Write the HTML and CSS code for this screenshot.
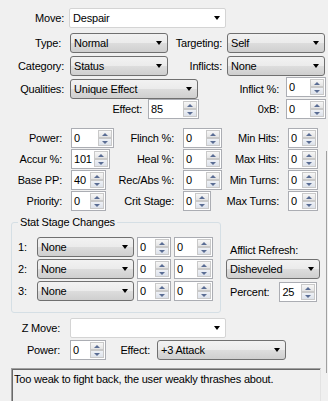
FILE: index.html
```html
<!DOCTYPE html>
<html lang="en">
<head>
    <meta charset="UTF-8">
    <title>Move Editor</title>
    <link rel="stylesheet" href="styles.css">
</head>
<body>
    <div class="form">
        <div class="row move-row">
            <span class="lbl lbl-move">Move:</span>
            <div class="combo edit move-name"><span>Despair</span><i class="arrow"></i></div>
        </div>

        <div class="row type-row">
            <span class="lbl lbl-type">Type:</span>
            <div class="combo combo-type"><span>Normal</span><i class="arrow"></i></div>
            <span class="lbl lbl-target">Targeting:</span>
            <div class="combo combo-target"><span>Self</span><i class="arrow"></i></div>
        </div>

        <div class="row cat-row">
            <span class="lbl lbl-cat">Category:</span>
            <div class="combo combo-type"><span>Status</span><i class="arrow"></i></div>
            <span class="lbl lbl-target">Inflicts:</span>
            <div class="combo combo-target"><span>None</span><i class="arrow"></i></div>
        </div>

        <div class="row qual-row">
            <span class="lbl lbl-cat">Qualities:</span>
            <div class="combo combo-qual"><span>Unique Effect</span><i class="arrow"></i></div>
            <span class="lbl lbl-inflict">Inflict %:</span>
            <div class="spin spin-inflict"><span class="val">0</span><span class="btns"><i class="up"></i><i class="down"></i></span></div>
        </div>

        <div class="row effect-row">
            <span class="lbl lbl-effect">Effect:</span>
            <div class="spin spin-effect"><span class="val">85</span><span class="btns"><i class="up"></i><i class="down"></i></span></div>
            <span class="lbl lbl-oxb">0xB:</span>
            <div class="spin spin-oxb"><span class="val">0</span><span class="btns"><i class="up"></i><i class="down"></i></span></div>
        </div>

        <div class="stats">
            <span class="lbl">Power:</span>
            <div class="cell"><div class="spin w43"><span class="val">0</span><span class="btns"><i class="up"></i><i class="down"></i></span></div></div>
            <span class="lbl">Flinch %:</span>
            <div class="cell"><div class="spin w39"><span class="val">0</span><span class="btns"><i class="up"></i><i class="down"></i></span></div></div>
            <span class="lbl">Min Hits:</span>
            <div class="cell"><div class="spin w30"><span class="val">0</span><span class="btns"><i class="up"></i><i class="down"></i></span></div></div>

            <span class="lbl">Accur %:</span>
            <div class="cell"><div class="spin w39"><span class="val">101</span><span class="btns"><i class="up"></i><i class="down"></i></span></div></div>
            <span class="lbl">Heal %:</span>
            <div class="cell"><div class="spin w39"><span class="val">0</span><span class="btns"><i class="up"></i><i class="down"></i></span></div></div>
            <span class="lbl">Max Hits:</span>
            <div class="cell"><div class="spin w30"><span class="val">0</span><span class="btns"><i class="up"></i><i class="down"></i></span></div></div>

            <span class="lbl">Base PP:</span>
            <div class="cell"><div class="spin w35"><span class="val">40</span><span class="btns"><i class="up"></i><i class="down"></i></span></div></div>
            <span class="lbl">Rec/Abs %:</span>
            <div class="cell"><div class="spin w39"><span class="val">0</span><span class="btns"><i class="up"></i><i class="down"></i></span></div></div>
            <span class="lbl">Min Turns:</span>
            <div class="cell"><div class="spin w30"><span class="val">0</span><span class="btns"><i class="up"></i><i class="down"></i></span></div></div>

            <span class="lbl">Priority:</span>
            <div class="cell"><div class="spin w35"><span class="val">0</span><span class="btns"><i class="up"></i><i class="down"></i></span></div></div>
            <span class="lbl">Crit Stage:</span>
            <div class="cell"><div class="spin w28"><span class="val">0</span><span class="btns"><i class="up"></i><i class="down"></i></span></div></div>
            <span class="lbl">Max Turns:</span>
            <div class="cell"><div class="spin w30"><span class="val">0</span><span class="btns"><i class="up"></i><i class="down"></i></span></div></div>
        </div>

        <div class="stage-section">
            <fieldset class="stage-group">
                <legend>Stat Stage Changes</legend>
                <div class="stage-row">
                    <span class="num">1:</span>
                    <div class="combo combo-stat"><span>None</span><i class="arrow"></i></div>
                    <div class="spin w34"><span class="val">0</span><span class="btns"><i class="up"></i><i class="down"></i></span></div>
                    <div class="spin w39"><span class="val">0</span><span class="btns"><i class="up"></i><i class="down"></i></span></div>
                </div>
                <div class="stage-row">
                    <span class="num">2:</span>
                    <div class="combo combo-stat"><span>None</span><i class="arrow"></i></div>
                    <div class="spin w34"><span class="val">0</span><span class="btns"><i class="up"></i><i class="down"></i></span></div>
                    <div class="spin w39"><span class="val">0</span><span class="btns"><i class="up"></i><i class="down"></i></span></div>
                </div>
                <div class="stage-row">
                    <span class="num">3:</span>
                    <div class="combo combo-stat"><span>None</span><i class="arrow"></i></div>
                    <div class="spin w34"><span class="val">0</span><span class="btns"><i class="up"></i><i class="down"></i></span></div>
                    <div class="spin w39"><span class="val">0</span><span class="btns"><i class="up"></i><i class="down"></i></span></div>
                </div>
            </fieldset>

            <div class="afflict">
                <div class="afflict-title">Afflict Refresh:</div>
                <div class="combo combo-afflict"><span>Disheveled</span><i class="arrow"></i></div>
                <div class="row percent-row">
                    <span class="lbl">Percent:</span>
                    <div class="spin w38"><span class="val">25</span><span class="btns"><i class="up"></i><i class="down"></i></span></div>
                </div>
            </div>
        </div>

        <div class="row zmove-row">
            <span class="lbl lbl-z">Z Move:</span>
            <div class="combo edit combo-z"><span></span><i class="arrow"></i></div>
        </div>

        <div class="row zpower-row">
            <span class="lbl lbl-z">Power:</span>
            <div class="spin w36 spin-zpower"><span class="val">0</span><span class="btns"><i class="up"></i><i class="down"></i></span></div>
            <span class="lbl lbl-zeffect">Effect:</span>
            <div class="combo combo-zeffect"><span>+3 Attack</span><i class="arrow"></i></div>
        </div>

        <div class="desc">Too weak to fight back, the user weakly thrashes about.</div>
    </div>
</body>
</html>
```

FILE: styles.css
```css
body {
    margin: 0;
    background: #f0f0f0;
    font-family: "Liberation Sans", Arial, sans-serif;
    font-size: 11px;
    letter-spacing: -0.2px;
    color: #000;
    width: 328px;
    height: 401px;
    overflow: hidden;
}

.form {
    position: relative;
    height: 401px;
}
/* edge of the scrolling panel behind the form */
.form::after {
    content: '';
    position: absolute;
    right: 1px;
    top: 143px;
    height: 222px;
    width: 1px;
    background: #a0a0a0;
}

.row {
    display: flex;
    align-items: center;
    height: 20px;
}

.lbl {
    display: flex;
    justify-content: flex-end;
    white-space: nowrap;
    flex: none;
}

/* dropdown list, windows 7 look */
.combo {
    flex: none;
    box-sizing: border-box;
    height: 20px;
    display: flex;
    align-items: center;
    padding-left: 3px;
    border: 1px solid #707070;
    border-radius: 3px;
    background: linear-gradient(#f2f2f2, #ebebeb 50%, #dddddd 50%, #cfcfcf);
    white-space: nowrap;
}
.combo .arrow {
    margin-left: auto;
    margin-right: 5px;
    border-left: 3.5px solid transparent;
    border-right: 3.5px solid transparent;
    border-top: 4px solid #000;
}
.combo.edit {
    background: #fff;
    border-color: #d4d4d4;
    border-radius: 2px;
}

/* numeric up/down */
.spin {
    flex: none;
    box-sizing: border-box;
    height: 20px;
    display: flex;
    border: 1px solid #abadb3;
    background: #fff;
}
.spin .val {
    flex: 1;
    padding-left: 2px;
    line-height: 18px;
}
.spin .btns {
    display: flex;
    flex-direction: column;
    width: 14px;
    margin: 1px 1px 1px 0;
}
.spin .btns i {
    flex: 1;
    display: flex;
    align-items: center;
    justify-content: center;
    box-sizing: border-box;
    border: 1px solid #c9c9c9;
    background: linear-gradient(#f7f7f7, #e4e4e4);
}
.spin .btns i.down {
    background: linear-gradient(#eef1f6, #dde2ea);
}
.spin .up::before {
    content: '';
    border-left: 3px solid transparent;
    border-right: 3px solid transparent;
    border-bottom: 3px solid #5a6d94;
}
.spin .down::before {
    content: '';
    border-left: 3px solid transparent;
    border-right: 3px solid transparent;
    border-top: 3px solid #5a6d94;
}

.w28 { width: 28px; }
.w30 { width: 30px; }
.w34 { width: 34px; }
.w35 { width: 35px; }
.w36 { width: 36px; }
.w38 { width: 38px; }
.w39 { width: 39px; }
.w43 { width: 43px; }

/* top block */
.move-row { margin-top: 8px; }
.type-row { margin-top: 5px; }
.cat-row { margin-top: 3px; }
.qual-row { margin-top: 3px; }
.effect-row { margin-top: 0; }

.lbl-move { width: 64px; }
.move-name { margin-left: 5px; width: 157px; }
.lbl-type { width: 61px; margin-right: 3px; }
.lbl-cat { width: 64px; }
.combo-type { margin-left: 6px; width: 98px; }
.lbl-target { width: 54px; }
.combo-target { margin-left: 5px; width: 98px; }
.combo-qual { margin-left: 6px; width: 128px; }
.lbl-inflict { width: 81px; }
.spin-inflict {
    margin-left: 7px;
    width: 40px;
    align-self: flex-start;
    margin-top: -2px;
}
.lbl-effect { width: 142px; }
.spin-effect { margin-left: 6px; width: 51px; }
.lbl-oxb { width: 80px; }
.spin-oxb { margin-left: 7px; width: 40px; }

/* stats grid */
.stats {
    display: grid;
    grid-template-columns: 62px 52px 60px 48px 57px 39px;
    grid-auto-rows: 20px;
    row-gap: 1px;
    align-items: center;
    margin-top: 9px;
}
.stats .cell {
    padding-left: 9px;
}

/* stat stage group */
.stage-section {
    display: flex;
    margin-top: 5px;
}
.stage-group {
    margin: 0 0 0 11px;
    padding: 8px 0 11px 0;
    width: 210px;
    box-sizing: border-box;
    border: 1px solid #d5dfe5;
    border-radius: 3px;
}
.stage-group legend {
    margin-left: 6px;
    padding: 0 2px;
    line-height: 13px;
}
.stage-row {
    display: flex;
    align-items: center;
    height: 20px;
    margin-bottom: 2px;
}
.stage-row:last-child { margin-bottom: 0; }
.stage-row .num {
    width: 25px;
    padding-left: 6px;
    box-sizing: border-box;
}
.combo-stat { width: 97px; margin-left: 0; margin-right: 3px; }
.stage-row .w34 { margin-right: 3px; }

.afflict {
    margin-left: 5px;
    width: 94px;
}
.afflict-title {
    margin-top: 28px;
    padding-left: 4px;
    line-height: 13px;
}
.combo-afflict {
    margin-top: 2px;
    width: 94px;
}
.percent-row {
    margin-top: 3px;
    padding-left: 4px;
}
.percent-row .spin { margin-left: 10px; }

/* z move */
.zmove-row { margin-top: 5px; }
.zpower-row { margin-top: 2px; }
.lbl-z { width: 60px; }
.combo-z { margin-left: 10px; width: 156px; }
.spin-zpower { margin-left: 10px; }
.lbl-zeffect { width: 44px; }
.combo-zeffect { margin-left: 7px; width: 129px; }

.desc {
    margin: 8px 0 0 11px;
    width: 310px;
    height: 40px;
    box-sizing: border-box;
    padding: 4px 0 0 2px;
    border: 1px solid #a0a0a0;
    border-right-color: #e3e3e3;
    box-shadow: inset 1px 1px 0 #696969;
    white-space: nowrap;
}
```
